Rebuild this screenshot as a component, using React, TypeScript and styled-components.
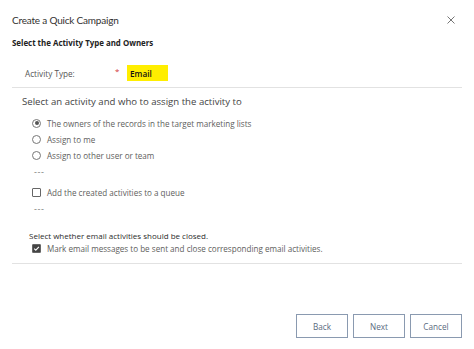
import { ReactElement } from 'react';
import styled, { createGlobalStyle } from 'styled-components';

const GlobalStyle = createGlobalStyle`
  html, body {
    margin: 0;
    padding: 0;
    background: #ffffff;
  }
  body {
    font-family: 'Open Sans', 'Noto Sans', sans-serif;
    color: #333333;
  }
`;

const Dialog = styled.div`
  width: 474px;
  height: 349px;
  box-sizing: border-box;
  padding: 0 12px;
  display: flex;
  flex-direction: column;
  background: #ffffff;
`;

const Header = styled.div`
  height: 37px;
  display: flex;
  align-items: center;
  justify-content: space-between;
  padding-top: 3px;
  box-sizing: border-box;
`;

const Title = styled.div`
  font-family: Lato, 'Open Sans', sans-serif;
  font-size: 10px;
  color: #323130;
  letter-spacing: -0.2px;
`;

const CloseButton = styled.button`
  width: 16px;
  height: 16px;
  border: none;
  background: transparent;
  padding: 0;
  margin-right: 3px;
  display: flex;
  align-items: center;
  justify-content: center;
  cursor: pointer;
`;

const SectionTitle = styled.div`
  font-size: 7.9px;
  font-weight: 700;
  line-height: 12px;
  color: #222222;
`;

const FieldRow = styled.div`
  margin-top: 16px;
  height: 16px;
  padding-left: 13px;
  display: flex;
  align-items: center;
`;

const FieldLabel = styled.div`
  width: 90px;
  font-size: 8.2px;
  color: #555555;
`;

const Required = styled.span`
  width: 12px;
  font-size: 8px;
  color: #d13438;
  margin-top: -5px;
`;

const Highlight = styled.div`
  height: 16px;
  width: 41px;
  padding-left: 3px;
  box-sizing: border-box;
  display: flex;
  align-items: center;
  background: #ffee00;
  font-size: 8.2px;
  font-weight: 600;
  color: #111111;
`;

const Divider = styled.div<{ $gap: number }>`
  margin-top: ${({ $gap }) => $gap}px;
  border-top: 1px solid #e2e2e2;
`;

const Question = styled.div`
  margin-top: 7px;
  padding-left: 10px;
  font-size: 9.6px;
  line-height: 14px;
  color: #444444;
`;

const OptionList = styled.div<{ $top: number }>`
  margin-top: ${({ $top }) => $top}px;
  padding-left: 20px;
  display: flex;
  flex-direction: column;
`;

const Option = styled.div<{ $height?: number }>`
  height: ${({ $height }) => $height ?? 16}px;
  display: flex;
  align-items: center;
  gap: 6px;
  font-size: 8.1px;
  color: #605e5c;
`;

const Radio = styled.span<{ $checked?: boolean }>`
  width: 7px;
  height: 7px;
  border: 1px solid #777777;
  border-radius: 50%;
  display: flex;
  align-items: center;
  justify-content: center;
  flex-shrink: 0;

  &::after {
    content: '';
    width: 4px;
    height: 4px;
    border-radius: 50%;
    background: ${({ $checked }) => ($checked ? '#555555' : 'transparent')};
  }
`;

const Box = styled.span<{ $checked?: boolean }>`
  width: 7px;
  height: 7px;
  border: 1px solid #666666;
  border-radius: 1px;
  background: ${({ $checked }) => ($checked ? '#444444' : '#ffffff')};
  display: flex;
  align-items: center;
  justify-content: center;
  flex-shrink: 0;
`;

const Dashes = styled.div<{ $top: number }>`
  margin-top: ${({ $top }) => $top}px;
  padding-left: 22px;
  height: 10px;
  font-size: 9px;
  line-height: 10px;
  letter-spacing: 0.6px;
  color: #7a7a7a;
`;

const CloseHint = styled.div`
  margin-top: 16px;
  padding-left: 17px;
  font-size: 8px;
  line-height: 12px;
  color: #2b2b2b;
`;

const Footer = styled.div`
  margin-top: auto;
  padding-bottom: 11px;
  display: flex;
  justify-content: flex-end;
  gap: 5px;
`;

const Button = styled.button`
  width: 52px;
  height: 24px;
  border: 1px solid #8a9ab0;
  background: #ffffff;
  font-family: inherit;
  font-size: 8.2px;
  color: #5a6a80;
  cursor: pointer;
`;

const options = [
  { label: 'The owners of the records in the target marketing lists', checked: true },
  { label: 'Assign to me', checked: false },
  { label: 'Assign to other user or team', checked: false },
];

export default function App(): ReactElement {
  return (
    <>
      <GlobalStyle />
      <Dialog>
        <Header>
          <Title>Create a Quick Campaign</Title>
          <CloseButton aria-label="Close">
            <svg width="8" height="8" viewBox="0 0 8 8">
              <path d="M0.5 0.5 L7.5 7.5 M7.5 0.5 L0.5 7.5" stroke="#666" strokeWidth="0.9" />
            </svg>
          </CloseButton>
        </Header>
        <SectionTitle>Select the Activity Type and Owners</SectionTitle>
        <FieldRow>
          <FieldLabel>Activity Type:</FieldLabel>
          <Required>*</Required>
          <Highlight>Email</Highlight>
        </FieldRow>
        <Divider $gap={6} />
        <Question>Select an activity and who to assign the activity to</Question>
        <OptionList $top={6}>
          {options.map((o) => (
            <Option key={o.label}>
              <Radio $checked={o.checked} />
              {o.label}
            </Option>
          ))}
        </OptionList>
        <Dashes $top={4}>---</Dashes>
        <OptionList $top={7}>
          <Option>
            <Box />
            Add the created activities to a queue
          </Option>
        </OptionList>
        <Dashes $top={4}>---</Dashes>
        <CloseHint>Select whether email activities should be closed.</CloseHint>
        <OptionList $top={0}>
          <Option $height={13}>
            <Box $checked>
              <svg width="7" height="7" viewBox="0 0 7 7">
                <path d="M1.2 3.6 L2.8 5.2 L5.9 1.8" stroke="#fff" strokeWidth="1.1" fill="none" />
              </svg>
            </Box>
            Mark email messages to be sent and close corresponding email activities.
          </Option>
        </OptionList>
        <Divider $gap={8} />
        <Footer>
          <Button>Back</Button>
          <Button>Next</Button>
          <Button>Cancel</Button>
        </Footer>
      </Dialog>
    </>
  );
}
